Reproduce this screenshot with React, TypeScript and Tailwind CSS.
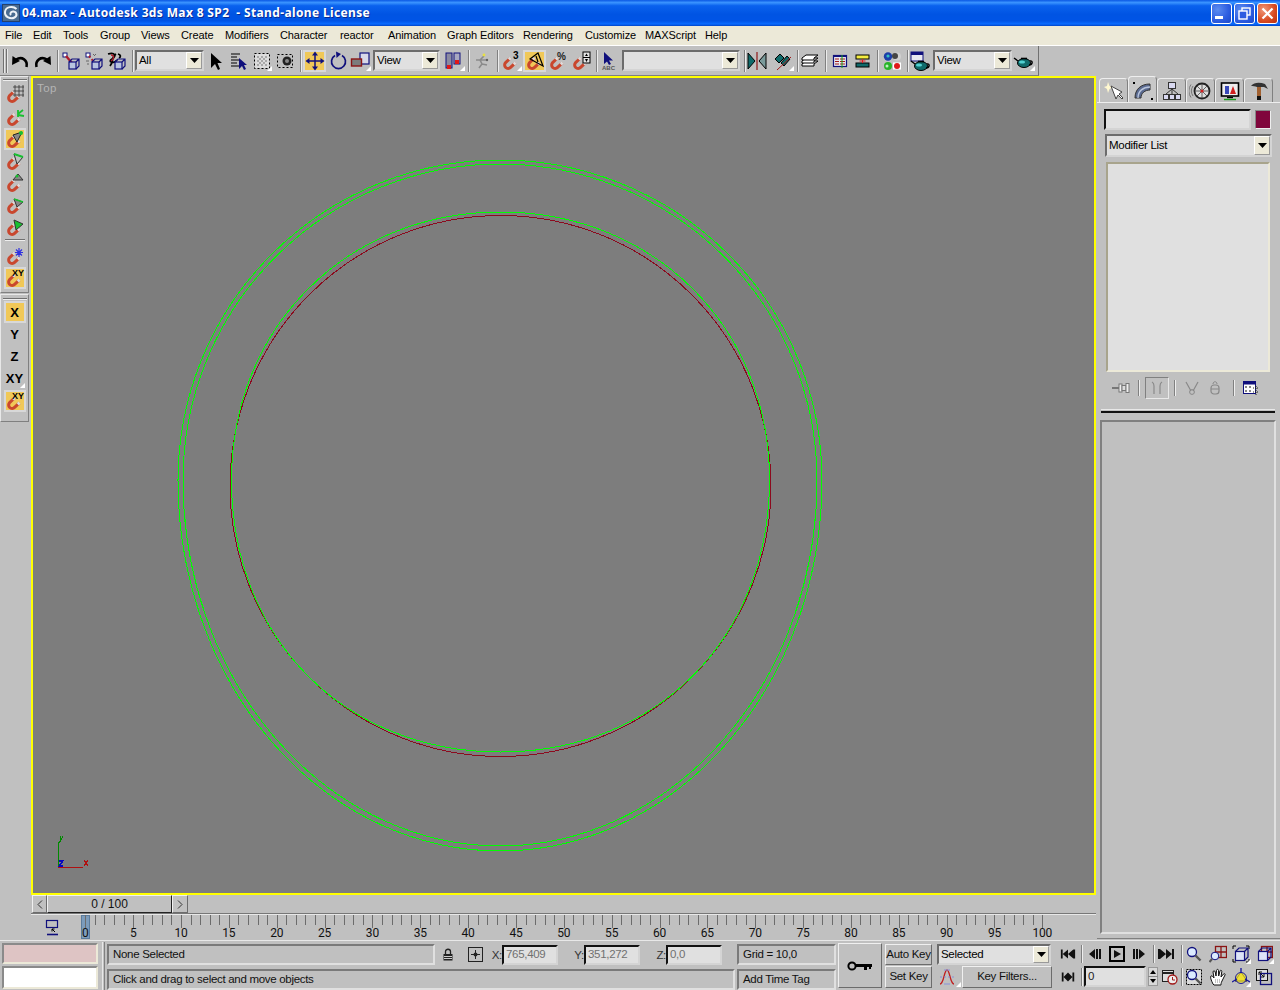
import React from "react";

const font = "font-['Liberation_Sans',Arial,sans-serif]";
const txt = "text-[11.5px] tracking-[-0.3px]";
const sunken = "border-2 border-t-[#6c6c6c] border-l-[#6c6c6c] border-r-[#d4d4d4] border-b-[#d4d4d4]";
const groove = "border-2 border-t-[#7a7a7a] border-l-[#7a7a7a] border-r-[#e0e0e0] border-b-[#e0e0e0]";
const raised = "border border-t-[#f0f0f0] border-l-[#f0f0f0] border-r-[#6c6c6c] border-b-[#6c6c6c]";
const NAVY = "#10107c";
const TEAL = "#0f6a6a";

const V = ({ w = 20, h = 20, children }: { w?: number; h?: number; children: React.ReactNode }) => (
  <svg width={w} height={h} viewBox={`0 0 ${w} ${h}`} className="block shrink-0">{children}</svg>
);

const Cube = ({ x, y, c = NAVY }: { x: number; y: number; c?: string }) => (
  <g fill="none" stroke={c} strokeWidth="1.2" transform={`translate(${x} ${y})`}>
    <rect x="0" y="3" width="7" height="7" fill="#b8c4e0" />
    <path d="M0 3 L3 0 H10 V7 L7 10 M7 3 L10 0" />
  </g>
);
const Undo = () => (
  <V><path d="M16.5 16 C18 9 12 5 6 8.5" fill="none" stroke="#000" strokeWidth="2.6" /><polygon points="2,14 2.5,5 10,10" fill="#000" /></V>
);
const Redo = () => (
  <V><g transform="matrix(-1 0 0 1 20 0)"><path d="M16.5 16 C18 9 12 5 6 8.5" fill="none" stroke="#000" strokeWidth="2.6" /><polygon points="2,14 2.5,5 10,10" fill="#000" /></g></V>
);
const LinkI = () => (
  <V><rect x="2" y="2" width="4" height="4" fill="#fff" stroke={NAVY} /><path d="M5 5 L11 12" stroke="#b01c2c" strokeWidth="2.4" /><Cube x={8} y={8} /></V>
);
const UnlinkI = () => (
  <V><rect x="2" y="2" width="4" height="4" fill="#fff" stroke={NAVY} /><path d="M5 5 L11 12" stroke="#b01c2c" strokeWidth="2" strokeDasharray="2 2" /><path d="M9 3 l2 2 M12 3 l-1 1 M2 10 h3 M3 13 h2" stroke="#666" /><Cube x={8} y={8} /></V>
);
const BindI = () => (
  <V><path d="M2 3 C9 1 11 5 6 8 C1 11 8 13 11 9 M4 15 C8 10 5 6 10 3 M12 3 C15 4 15 6 13 7" fill="none" stroke="#000" strokeWidth="1.8" /><path d="M5 4 C9 4 8 8 5 10" fill="none" stroke="#b01c2c" strokeWidth="1.4" /><Cube x={9} y={8} /></V>
);
const SelectI = () => <V><polygon points="4,2 4,17 8,13 11,19 13,18 10.5,12 15,12" fill="#000" /></V>;
const ByName = () => (
  <V><path d="M2 3 H11 M2 6 H8 M2 9 H11 M2 12 H8 M2 15 H11" stroke="#000" /><polygon points="10,7 10,18 13,15 15,19 17,18 15,14 18,14" fill={NAVY} /></V>
);
const RectSel = () => (
  <V><rect x="3" y="3" width="14" height="14" fill="#dcdcdc" /><path d="M5 5h2v2H5zM9 5h2v2H9zM13 5h2v2h-2zM7 7h2v2H7zM11 7h2v2h-2zM5 9h2v2H5zM9 9h2v2H9zM13 9h2v2h-2zM7 11h2v2H7zM11 11h2v2h-2zM5 13h2v2H5zM9 13h2v2H9zM13 13h2v2h-2z" fill="#a8a8a8" /><rect x="2.5" y="2.5" width="15" height="15" fill="none" stroke="#000" strokeDasharray="2 2" /></V>
);
const WindowI = () => (
  <V><rect x="2.5" y="3.5" width="15" height="13" fill="none" stroke="#000" strokeDasharray="2 2" /><circle cx="12" cy="10" r="4.5" fill="#222" /><circle cx="12" cy="10" r="2" fill="#888" /></V>
);
const MoveI = () => (
  <V><path d="M10 3 V17 M3 10 H17" stroke={NAVY} strokeWidth="1.5" /><polygon points="10,0.5 7,4.5 13,4.5" fill={NAVY} /><polygon points="10,19.5 7,15.5 13,15.5" fill={NAVY} /><polygon points="0.5,10 4.5,7 4.5,13" fill={NAVY} /><polygon points="19.5,10 15.5,7 15.5,13" fill={NAVY} /></V>
);
const RotateI = () => (
  <V><path d="M7 4.5 A7 7 0 1 0 14 4.5" fill="none" stroke={NAVY} strokeWidth="1.7" /><polygon points="8,0.5 8.5,7 13,3" fill={NAVY} /></V>
);
const ScaleI = () => (
  <V w={22}><rect x="10" y="2" width="9" height="11" fill="#d8d8e8" stroke={NAVY} strokeWidth="1.2" /><rect x="1.5" y="8" width="10" height="7" fill="#7c7c7c" stroke="#8a1414" strokeWidth="1.4" /></V>
);
const PivotI = () => (
  <V><rect x="3" y="2" width="6" height="15" fill="#8a8aa0" stroke={NAVY} /><rect x="11" y="2" width="6" height="11" fill="#a8a8c0" stroke={NAVY} /><rect x="4" y="14" width="4" height="4" fill="#e01818" /><rect x="12" y="9" width="4" height="4" fill="#e01818" /></V>
);
const ManipI = () => (
  <V><path d="M12 5 L8 9 L4 9 M8 9 L10 13 L7 17 M10 13 L15 14 M9 9 L15 9" fill="none" stroke="#8a8a8a" strokeWidth="1.6" /><circle cx="12" cy="4" r="1.4" fill="#e8e040" /><circle cx="15" cy="9" r="1.2" fill="#606060" /></V>
);
const Magnet = ({ children }: { children?: React.ReactNode }) => (
  <V>
    <path d="M9.5 7 L4.6 11.6 A3.4 3.4 0 0 0 9.6 16.4 L14.4 11.8" fill="none" stroke="#c9472e" strokeWidth="3" />
    <path d="M9.6 6.9 L7.9 8.5 M14.5 11.7 L12.8 13.3" stroke="#dcdcdc" strokeWidth="3" />
    {children}
  </V>
);
const Snap3 = () => <Magnet><text x="12" y="8" fontSize="10" fontWeight="700" fontFamily="Liberation Sans" fill="#000">3</text></Magnet>;
const SnapAngle = () => <Magnet><path d="M5 8 L13 2 L18 15 Z M11 5 L13 11" fill="none" stroke="#000" strokeWidth="1.2" /></Magnet>;
const SnapPct = () => <Magnet><text x="9" y="9" fontSize="10" fontWeight="700" fontFamily="Liberation Sans" fill="#222">%</text></Magnet>;
const SnapSpin = () => (
  <Magnet><rect x="12" y="1" width="7" height="11" fill="#e4e4e4" stroke="#000" /><path d="M12 6.5 H19" stroke="#000" /><polygon points="15.5,2.5 14,5 17,5" /><polygon points="15.5,11 14,8 17,8" /></Magnet>
);
const ArcI = () => (
  <V><polygon points="5,1 5,13 8,10.5 10,14 12,13 10,9.5 14,9.5" fill={NAVY} /><text x="3" y="19" fontSize="6" fontWeight="700" fontFamily="Liberation Sans" fill="#555">ABC</text></V>
);
const MirrorI = () => (
  <V w={22}><polygon points="2,2 9,10 2,18" fill={TEAL} stroke="#000" /><polygon points="20,2 13,10 20,18" fill="#7a9a9a" stroke="#000" /><path d="M11 1 V19" stroke="#901818" strokeWidth="1.2" /></V>
);
const AlignI = () => (
  <V><path d="M3 8 L8 3 L12 7 L7 12 Z" fill={TEAL} stroke="#000" /><path d="M9 12 L15 5 L18 8 L12 15 Z" fill={TEAL} stroke="#000" /><path d="M5 19 L19 6" stroke="#a01818" /></V>
);
const LayersI = () => (
  <V><g fill="#fff" stroke="#000"><path d="M2 13 L6 10 H18 L14 13 V15 H2 Z" /><path d="M2 10 L6 7 H18 L14 10 V12 H2 Z" /><path d="M2 7 L6 4 H18 L14 7 V9 H2 Z" /></g></V>
);
const TrackI = () => (
  <V><rect x="3.5" y="4.5" width="13" height="11" fill="#e8e8f0" stroke={NAVY} strokeWidth="1.2" /><rect x="3" y="4" width="14" height="2" fill={NAVY} /><path d="M5 8h4M5 10.5h4M5 13h4M10 8h5M10 10.5h5M10 13h5" stroke="#a01818" /><path d="M12 4V17" stroke="#18a018" /></V>
);
const SchemI = () => (
  <V><rect x="3" y="4" width="13" height="4" fill="#f4ec40" stroke="#000" /><rect x="3" y="12" width="13" height="4" fill={TEAL} stroke="#000" /><path d="M9.5 8 V12 M6.5 10 H12.5" stroke="#e02020" /></V>
);
const MatI = () => (
  <V><circle cx="6" cy="5.5" r="4.2" fill="#1c3ea8" /><circle cx="6" cy="5" r="1.6" fill="#30c0c0" /><circle cx="15" cy="5.5" r="4" fill="#d0d0d0" /><circle cx="13" cy="5" r="3" fill="#444" /><circle cx="6" cy="15" r="4" fill="#28b428" /><circle cx="5" cy="15" r="1.5" fill="#c0f0c0" /><rect x="11" y="11.5" width="8" height="7" fill="#fff" /><circle cx="15" cy="15" r="3" fill="#e01818" /></V>
);
const Teapot = () => (
  <>
    <ellipse cx="11" cy="13" rx="6.5" ry="4.5" fill={TEAL} stroke="#000" />
    <path d="M5 11 L1 8 M17 11 C20 10 20 15 16 15" fill="none" stroke="#000" strokeWidth="1.4" />
    <ellipse cx="9" cy="12" rx="3" ry="1.6" fill="#50d0d0" />
    <path d="M8 8.5 H14" stroke="#000" strokeWidth="1.6" />
  </>
);
const RenderScene = () => (
  <V w={22}><rect x="2" y="1" width="12" height="9" fill="#e8e8f0" stroke={NAVY} /><rect x="2" y="1" width="12" height="3" fill={NAVY} /><g transform="translate(1 2)"><Teapot /></g></V>
);
const QuickRender = () => <V w={22}><g transform="translate(0 -1)"><Teapot /></g></V>;

const Fly = () => (
  <svg width="5" height="5" viewBox="0 0 5 5" className="absolute bottom-[1px] right-[1px]"><polygon points="5,0 5,5 0,5" fill="#fff" /></svg>
);

const Sep = ({ c }: { c: string }) => <div className={`h-[22px] w-[2px] shrink-0 border-l border-r border-l-[#808080] border-r-[#ececec] ${c}`} />;

const Tb = ({ w, children, fly, on }: { w: string; children: React.ReactNode; fly?: boolean; on?: boolean }) => (
  <div className={`relative flex h-[22px] shrink-0 items-center justify-center ${w} ${on ? "border-2 border-[#d8d8d8] bg-[#f0c858]" : ""}`}>
    {children}
    {fly ? <Fly /> : null}
  </div>
);

const Arrow = ({ w = "w-[16px]" }: { w?: string }) => (
  <div className={`flex h-full shrink-0 items-center justify-center bg-[#ece9d8] ${w} border border-t-[#fff] border-l-[#fff] border-r-[#999] border-b-[#999]`}>
    <svg width="9" height="5" viewBox="0 0 9 5"><polygon points="0,0 9,0 4.5,5" fill="#000" /></svg>
  </div>
);

const Drop = ({ w, text, extra = "" }: { w: string; text?: string; extra?: string }) => (
  <div className={`flex h-[21px] shrink-0 items-stretch bg-[#e0e0e0] ${sunken} ${w} ${extra}`}>
    <div className={`flex-1 truncate pl-[2px] leading-[17px] text-[#000] ${txt}`}>{text}</div>
    <Arrow />
  </div>
);

const menus: [string, string][] = [
  ["File", "w-[28px]"], ["Edit", "w-[30px]"], ["Tools", "w-[37px]"], ["Group", "w-[41px]"], ["Views", "w-[40px]"],
  ["Create", "w-[44px]"], ["Modifiers", "w-[55px]"], ["Character", "w-[60px]"], ["reactor", "w-[48px]"], ["Animation", "w-[59px]"],
  ["Graph Editors", "w-[76px]"], ["Rendering", "w-[62px]"], ["Customize", "w-[60px]"], ["MAXScript", "w-[60px]"], ["Help", "w-[30px]"],
];

const Logo = () => (
  <svg width="18" height="18" viewBox="0 0 18 18" className="block">
    <rect width="18" height="18" fill="#24406c" />
    <rect x="1" y="1" width="16" height="16" fill="#4a6c90" />
    <path d="M14.5 5 C11 1.5 3.5 2.5 3 8 C2.6 13 8.5 15.5 12.5 13.5 C15.5 12 15 8 11.5 7.5 C9 7.2 7.5 9.5 9 11" fill="none" stroke="#eef2f6" strokeWidth="2" />
  </svg>
);

const XpBtn = ({ red, children }: { red?: boolean; children: React.ReactNode }) => (
  <div className={`flex h-[21px] w-[21px] items-center justify-center rounded-[3px] border border-white ${red ? "bg-[radial-gradient(circle_at_30%_30%,#f09878,#d84a20_60%,#b83010)]" : "bg-[radial-gradient(circle_at_30%_30%,#5c8cf0,#2c5ce0_60%,#1c48c8)]"}`}>
    {children}
  </div>
);

const TitleBar = () => (
  <div className="flex h-[26px] shrink-0 items-center bg-[linear-gradient(180deg,#0a58e4_0%,#3a94ff_10%,#0a62ee_22%,#0054e3_55%,#0054e6_80%,#0a6cff_92%,#0044c8_100%)] pl-[2px] pr-[2px]">
    <Logo />
    <div className="ml-[2px] flex-1 whitespace-pre font-['Noto_Sans',sans-serif] text-[12px] font-bold tracking-[0.36px] text-white [text-shadow:1px_1px_0_#0a2a90]">04.max - Autodesk 3ds Max 8 SP2  - Stand-alone License</div>
    <div className="flex gap-[2px]">
      <XpBtn><div className="mt-[9px] mr-[5px] h-[3px] w-[8px] bg-white" /></XpBtn>
      <XpBtn>
        <svg width="13" height="13" viewBox="0 0 13 13"><rect x="4" y="1" width="8" height="7" fill="none" stroke="#fff" strokeWidth="1.4" /><rect x="1" y="4" width="8" height="8" fill="#2c5ce0" stroke="#fff" strokeWidth="1.4" /></svg>
      </XpBtn>
      <XpBtn red>
        <svg width="13" height="13" viewBox="0 0 13 13"><path d="M1.5 1.5 L11.5 11.5 M11.5 1.5 L1.5 11.5" stroke="#fff" strokeWidth="2.2" /></svg>
      </XpBtn>
    </div>
  </div>
);

const MenuBar = () => (
  <div className="flex h-[20px] shrink-0 items-start border-b border-white bg-[#ece9d8] pl-[5px] pt-[2px] text-[11px] leading-[14px] tracking-[-0.1px] text-black">
    {menus.map(([t, w]) => (
      <div key={t} className={`shrink-0 ${w}`}>{t}</div>
    ))}
  </div>
);

const Toolbar = () => (
  <div className="flex h-[30px] shrink-0">
    <div className="flex h-[30px] w-[1039px] items-center border-r border-b border-r-[#707070] border-b-[#808080] pl-[3px]">
      <div className="flex h-[24px] w-[5px] shrink-0 gap-[1px]">
        <div className="h-full w-[2px] border-l border-l-[#707070] bg-[#e8e8e8]" />
        <div className="h-full w-[2px] border-l border-l-[#707070] bg-[#e8e8e8]" />
      </div>
      <Tb w="w-[23px]"><Undo /></Tb>
      <Tb w="w-[23px]"><Redo /></Tb>
      <Sep c="ml-[3px] mr-[1px]" />
      <Tb w="w-[22px]"><LinkI /></Tb>
      <Tb w="w-[23px]"><UnlinkI /></Tb>
      <Tb w="w-[22px]"><BindI /></Tb>
      <Sep c="ml-[5px] mr-[1px]" />
      <Drop w="w-[69px]" text="All" />
      <Tb w="w-[23px] ml-[1px]"><SelectI /></Tb>
      <Tb w="w-[22px]"><ByName /></Tb>
      <Tb w="w-[22px] ml-[1px]" fly><RectSel /></Tb>
      <Tb w="w-[22px] ml-[1px]"><WindowI /></Tb>
      <Sep c="ml-[4px] mr-[1px]" />
      <Tb w="w-[23px]" on><MoveI /></Tb>
      <Tb w="w-[23px]"><RotateI /></Tb>
      <Tb w="w-[23px]" fly><ScaleI /></Tb>
      <Drop w="w-[67px] ml-[1px]" text="View" />
      <Tb w="w-[26px]" fly><PivotI /></Tb>
      <Sep c="ml-[2px]" />
      <Tb w="w-[24px]"><ManipI /></Tb>
      <Sep c="ml-[3px]" />
      <Tb w="w-[24px]" fly><Snap3 /></Tb>
      <Tb w="w-[23px]" on><SnapAngle /></Tb>
      <Tb w="w-[24px]"><SnapPct /></Tb>
      <Tb w="w-[22px]"><SnapSpin /></Tb>
      <Sep c="ml-[4px]" />
      <Tb w="w-[22px]"><ArcI /></Tb>
      <Drop w="w-[118px] ml-[2px]" />
      <Sep c="ml-[4px]" />
      <Tb w="w-[22px]"><MirrorI /></Tb>
      <Tb w="w-[27px]" fly><AlignI /></Tb>
      <Sep c="ml-[2px]" />
      <Tb w="w-[22px]"><LayersI /></Tb>
      <Sep c="ml-[4px]" />
      <Tb w="w-[26px]"><TrackI /></Tb>
      <Tb w="w-[20px]"><SchemI /></Tb>
      <Sep c="ml-[4px]" />
      <Tb w="w-[25px]"><MatI /></Tb>
      <Sep c="ml-[3px]" />
      <Tb w="w-[22px]"><RenderScene /></Tb>
      <Drop w="w-[79px] ml-[2px]" text="View" />
      <Tb w="w-[24px]" fly><QuickRender /></Tb>
    </div>
  </div>
);

const Lb = ({ children, on }: { children: React.ReactNode; on?: boolean }) => (
  <div className={`relative flex h-[22px] w-[22px] items-center justify-center ${on ? "border-2 border-[#d8d8d8] bg-[#f0c858]" : ""}`}>{children}</div>
);

const GREEN = "#18c030";
const LeftBar = () => (
  <div className="flex w-[31px] shrink-0 flex-col">
    <div className="flex h-[217px] w-[29px] flex-col items-center border border-t-[#e8e8e8] border-l-[#e8e8e8] border-r-[#808080] border-b-[#808080] pt-[2px]">
      <div className="mb-[2px] h-[2px] w-[24px] border-t border-t-[#707070] bg-[#eee]" />
      <Lb><Magnet><path d="M8 3H19M8 7H19M8 11H19M10 1V13M14 1V13M18 1V13" stroke="#333" strokeWidth="0.8" /></Magnet></Lb>
      <div className="h-[1px]" />
      <Lb><Magnet><path d="M13 10 L13 3 M13 7 L18 3 M13 8 L19 9" stroke={GREEN} strokeWidth="1.8" /></Magnet></Lb>
      <Lb on><Magnet><path d="M8 6 L17 3 L12 13 Z" fill="#888" stroke="#222" /><circle cx="16" cy="4" r="2" fill={GREEN} /></Magnet></Lb>
      <Lb><Magnet><path d="M9 3 L18 6 L12 13 Z" fill="none" stroke="#333" /><path d="M9 3 L18 6" stroke={GREEN} strokeWidth="2" /></Magnet></Lb>
      <Lb><Magnet><path d="M8 7 L18 7 L13 1 Z" fill="#888" stroke="#333" /><circle cx="12" cy="3" r="1.5" fill={GREEN} /></Magnet></Lb>
      <Lb><Magnet><path d="M9 4 L18 7 L12 12 Z" fill="#888" stroke="#333" /><path d="M9 4 L18 7" stroke={GREEN} strokeWidth="1.6" /></Magnet></Lb>
      <Lb><Magnet><path d="M9 3 L18 7 L11 13 Z" fill={GREEN} stroke="#333" /></Magnet></Lb>
      <div className="mb-[4px] mt-[1px] h-[2px] w-[20px] border-t border-t-[#707070] bg-[#eee]" />
      <Lb><Magnet><path d="M14 2V11M10 6.5H18M11 3.5L17 9.5M17 3.5L11 9.5" stroke="#3030e0" strokeWidth="1.2" /></Magnet></Lb>
      <Lb on><Magnet><text x="7" y="8" fontSize="9" fontWeight="700" fontFamily="Liberation Sans" fill="#000">XY</text></Magnet></Lb>
    </div>
    <div className="mt-[1px] flex h-[128px] w-[29px] flex-col items-center border border-t-[#e8e8e8] border-l-[#e8e8e8] border-r-[#808080] border-b-[#808080] pt-[3px] text-[13px] font-bold leading-none text-black">
      <div className="mb-[1px] h-[2px] w-[24px] border-t border-t-[#707070] bg-[#eee]" />
      <Lb on>X</Lb>
      <Lb>Y</Lb>
      <Lb>Z</Lb>
      <Lb>XY<Fly /></Lb>
      <div className="h-[1px]" />
      <Lb on><Magnet><text x="7" y="8" fontSize="9" fontWeight="700" fontFamily="Liberation Sans" fill="#000">XY</text></Magnet></Lb>
    </div>
  </div>
);

const Scene = () => (
  <svg viewBox="33 78 1061 815" width="1061" height="815" className="block" shapeRendering="crispEdges" fill="none">
    <circle cx="500.5" cy="486" r="270.5" stroke="#8c0a1e" />
    <path d="M231.5,480 C231.5,327 347,212 500.5,212 C654,212 769.5,327 769.5,480 C769.5,638 656,752 500.5,752 C344,752 231.5,638 231.5,480" stroke="#00ff00" />
    <path d="M178,480 A322,320 0 0 1 822,480 A322,371 0 0 1 178,480" stroke="#00ff00" />
    <path d="M183,480 A317,316 0 0 1 817,480 A317,366 0 0 1 183,480" stroke="#00ff00" />
    <path d="M58.5 867.5 V843 L60 841" stroke="#008a00" strokeWidth="1" />
    <path d="M58 867.5 H83" stroke="#b01010" strokeWidth="1" />
    <path d="M60 836 L61 840 L63 836 M61 840 L59 843" stroke="#008a00" />
    <path d="M59 861 H63 L59 866 H63" stroke="#0808c0" strokeWidth="1.2" />
    <path d="M84 860 L88 866 M88 860 L84 866" stroke="#b01010" strokeWidth="1.2" />
  </svg>
);

const Viewport = () => (
  <div className="relative h-[819px] w-[1065px] border-2 border-[#ffff00] bg-[#7d7d7d]">
    <Scene />
    <div className="absolute left-[4px] top-[3px] text-[11.5px] leading-[14px] tracking-[0.4px] text-[#b4b4b4]">Top</div>
  </div>
);

const TimeSlider = () => (
  <div className="flex h-[18px] w-[1065px] items-stretch pl-[1px] text-[12px] leading-[15px]">
    <div className={`flex w-[15px] items-center justify-center text-[#333] ${raised}`}>
      <svg width="6" height="9" viewBox="0 0 6 9"><path d="M5 0.5 L1 4.5 L5 8.5" fill="none" stroke="#333" /></svg>
    </div>
    <div className="flex w-[125px] items-center justify-center border border-t-[#f0f0f0] border-l-[#f0f0f0] border-r-[#222] border-b-[#222] text-[#111]">0 / 100</div>
    <div className={`flex w-[16px] items-center justify-center text-[#333] ${raised}`}>
      <svg width="6" height="9" viewBox="0 0 6 9"><path d="M1 0.5 L5 4.5 L1 8.5" fill="none" stroke="#333" /></svg>
    </div>
  </div>
);

const frames = Array.from({ length: 101 }, (_, i) => i);
const fx = (i: number) => 85.3 + i * 9.57;

const TrackBar = () => (
  <svg viewBox="31 913 1065 27" width="1065" height="27" className="block">
    <path d="M31 913.5 H1096" stroke="#777" />
    <path d="M31 914.5 H1096" stroke="#e8e8e8" />
    <rect x="81.5" y="915.5" width="8" height="23" fill="#7c9cbc" stroke="#5c7c9c" />
    {frames.map((i) => (
      <path key={i} d={`M${Math.round(fx(i)) + 0.5} 915 V${i % 5 === 0 ? 928 : 925}`} stroke="#6c6c6c" />
    ))}
    {frames.filter((i) => i % 5 === 0).map((i) => (
      <text key={i} x={fx(i)} y={937} textAnchor="middle" fontSize="12" fontFamily="Roboto" letterSpacing="-0.2" fill="#111">{i}</text>
    ))}
    <g fill="none" stroke={NAVY} strokeWidth="1.2">
      <rect x="46.5" y="920.5" width="11" height="7" />
      <path d="M47 934.5 H58" strokeWidth="1.6" />
    </g>
    <path d="M52 929 l3 3 M52 929 h2.5 M52 929 v2.5" stroke="#000" fill="none" />
  </svg>
);

const TabWrap = ({ on, children }: { on?: boolean; children: React.ReactNode }) => (
  <div className={`flex w-[29px] items-center justify-center rounded-t-[4px] border border-b-0 border-t-[#eee] border-l-[#eee] border-r-[#808080] ${on ? "h-[26px] bg-[#c8c8c8]" : "h-[24px]"}`}>{children}</div>
);

const Tabs = () => (
  <div className="flex h-[27px] items-end border-b border-b-[#eee] pl-[2px]">
    <TabWrap>
      <V><path d="M4 1 L5.5 5 L10 6 L5.5 8 L4 12 L3 8 L0 6 L3 5 Z" fill="#fff8d0" /><polygon points="7,5 12,18 14,14 18,18 19,17 15,13 18,11" fill="#fff" stroke="#444" /></V>
    </TabWrap>
    <TabWrap on>
      <V w={22}><path d="M3 18 C3 9 9 4 18 4 L18 10 C13 10 9 13 9 18 Z" fill="#5a6a90" stroke="#333" /><path d="M6 18 C6 11 11 7 18 7" fill="none" stroke="#b8c4dc" strokeWidth="1.4" /><rect x="1" y="2" width="2" height="2" fill="#000" /><rect x="19" y="18" width="2" height="2" fill="#000" /></V>
    </TabWrap>
    <TabWrap>
      <V><g fill="#d8d8f0" stroke="#333"><rect x="6.5" y="1.5" width="7" height="6" /><rect x="1.5" y="13.5" width="5" height="5" /><rect x="7.5" y="13.5" width="5" height="5" /><rect x="13.5" y="13.5" width="5" height="5" /></g><path d="M10 8 V13 M4 13 L10 8 L16 13" fill="none" stroke="#333" /></V>
    </TabWrap>
    <TabWrap>
      <V w={24}><path d="M4 5 A9 9 0 0 0 4 15 M2 3.5 A11 11 0 0 0 2 16.5" fill="none" stroke="#777" /><circle cx="13" cy="10" r="7.5" fill="#ddd" stroke="#222" strokeWidth="1.8" /><path d="M13 3V17M6 10H20M8 5L18 15M18 5L8 15" stroke="#444" strokeWidth="0.8" /><circle cx="13" cy="10" r="1.6" fill="#d02020" /></V>
    </TabWrap>
    <TabWrap>
      <V><rect x="1.5" y="2" width="17" height="13" fill="#eee" stroke="#000" strokeWidth="1.6" /><rect x="5" y="5" width="4" height="8" fill="#3848b8" /><polygon points="10,13 13,5 16,13" fill="#d02020" /><path d="M7 16.5H13" stroke="#000" strokeWidth="1.4" /><path d="M4 18.5H16" stroke="#18a018" strokeWidth="1.4" /></V>
    </TabWrap>
    <TabWrap>
      <V><path d="M2 5 C5 1 11 1 16 3 L19 8 L15 6 L12 6 L8 6 C6 5 4 5 2 5 Z" fill="#333" /><rect x="8" y="6" width="4" height="9" fill="#a06030" /><rect x="8" y="15" width="4" height="4" fill="#111" /></V>
    </TabWrap>
  </div>
);

const Gray = ({ children, w }: { children: React.ReactNode; w: string }) => (
  <div className={`flex h-[20px] shrink-0 items-center justify-center ${w}`}>{children}</div>
);

const RightPanel = () => (
  <div className="flex w-[184px] shrink-0 flex-col pl-[1px]">
    <Tabs />
    <div className="mt-[6px] flex items-start pl-[7px]">
      <div className="h-[21px] w-[147px] bg-[#e0e0e0] border-2 border-t-[#111] border-l-[#111] border-r-[#d4d4d4] border-b-[#d4d4d4]" />
      <div className="ml-[4px] mt-[1px] h-[19px] w-[16px] border border-t-[#888] border-l-[#888] border-r-[#eee] border-b-[#eee] bg-[#80063c]" />
    </div>
    <div className="mt-[4px] pl-[8px]">
      <div className={`flex h-[23px] w-[167px] items-stretch bg-[#e0e0e0] ${sunken}`}>
        <div className={`flex-1 pl-[2px] leading-[19px] text-black ${txt}`}>Modifier List</div>
        <Arrow />
      </div>
    </div>
    <div className="ml-[9px] mt-[5px] h-[210px] w-[164px] border-2 border-t-[#a8a48c] border-l-[#a8a48c] border-r-[#ece9d8] border-b-[#ece9d8] bg-[#e0e0e0]" />
    <div className="ml-[12px] mt-[6px] flex h-[20px] items-center">
      <Gray w="w-[24px]">
        <svg width="18" height="12" viewBox="0 0 18 12"><path d="M0 6 H7" stroke="#777" strokeWidth="2" /><rect x="7" y="2" width="3" height="8" fill="#eee" stroke="#777" /><rect x="10" y="3.5" width="4" height="5" fill="#ddd" stroke="#777" /><rect x="14" y="1.5" width="3" height="9" fill="#eee" stroke="#777" /></svg>
      </Gray>
      <div className="ml-[5px] mr-[5px] h-[16px] w-[2px] border-l border-r border-l-[#808080] border-r-[#eee]" />
      <div className="flex h-[22px] w-[24px] items-center justify-center border border-t-[#808080] border-l-[#808080] border-r-[#e8e8e8] border-b-[#e8e8e8]">
        <svg width="12" height="14" viewBox="0 0 12 14"><path d="M1 1 C3 2 3 3 3 5 V13 M11 1 C9 2 9 3 9 5 V13" fill="none" stroke="#8a8a8a" strokeWidth="1.2" /></svg>
      </div>
      <div className="ml-[5px] h-[16px] w-[2px] border-l border-r border-l-[#808080] border-r-[#eee]" />
      <Gray w="w-[28px] ml-[2px]">
        <svg width="14" height="14" viewBox="0 0 14 14"><path d="M1 1 L6 10 M13 1 L8 10" stroke="#888" strokeWidth="1.2" /><circle cx="7" cy="11" r="2.4" fill="none" stroke="#888" /></svg>
      </Gray>
      <Gray w="w-[18px]">
        <svg width="10" height="14" viewBox="0 0 10 14"><rect x="1" y="4" width="8" height="9" rx="3" fill="none" stroke="#888" strokeWidth="1.2" /><path d="M3 3 C3 0 7 0 7 3 M1 8 H9" fill="none" stroke="#888" /></svg>
      </Gray>
      <div className="ml-[9px] h-[16px] w-[2px] border-l border-r border-l-[#808080] border-r-[#eee]" />
      <Gray w="w-[30px] ml-[1px]">
        <svg width="16" height="15" viewBox="0 0 16 15"><rect x="0.5" y="0.5" width="12" height="12" fill="#fff" stroke={NAVY} /><rect x="0.5" y="0.5" width="12" height="3" fill={NAVY} /><path d="M2 5h2v2H2zM6 5h2v2H6zM2 9h2v2H2zM6 9h2v2H6z" fill="#888" /><path d="M10 7 H16 M10 11 H16 M13 5 V15" stroke="#222" strokeDasharray="1 1" /></svg>
      </Gray>
    </div>
    <div className="ml-[4px] mt-[11px] h-[4px] w-[174px] border-t border-b-2 border-t-[#e8e8e8] border-b-[#111]" />
    <div className="ml-[3px] mt-[7px] h-[514px] w-[176px] border-2 border-t-[#808080] border-l-[#808080] border-r-[#e0e0e0] border-b-[#e0e0e0]" />
    <div className="mt-[4px] h-[1px] bg-[#808080]" />
  </div>
);

const Inset = ({ w, children, extra = "" }: { w: string; children?: React.ReactNode; extra?: string }) => (
  <div className={`flex h-[21px] shrink-0 items-center pl-[4px] text-[#111] ${txt} ${groove} ${w} ${extra}`}>{children}</div>
);

const Field = ({ w, children }: { w: string; children?: React.ReactNode }) => (
  <div className={`flex h-[20px] shrink-0 items-center bg-[#e0e0e0] pl-[2px] text-[#707070] ${txt} border-2 border-t-[#111] border-l-[#111] border-r-[#d4d4d4] border-b-[#d4d4d4] ${w}`}>{children}</div>
);

const Axis = ({ w, children }: { w: string; children: React.ReactNode }) => (
  <div className={`shrink-0 text-right leading-[20px] text-[#333] ${txt} ${w}`}>{children}</div>
);

const SmallBtn = ({ w, h, children, extra = "" }: { w: string; h: string; children: React.ReactNode; extra?: string }) => (
  <div className={`flex shrink-0 items-center justify-center whitespace-nowrap text-[#111] ${txt} ${raised} ${w} ${h} ${extra}`}>{children}</div>
);

const T = ({ w, children, extra = "", fly }: { w: string; children: React.ReactNode; extra?: string; fly?: boolean }) => (
  <div className={`relative flex h-[23px] shrink-0 items-center justify-center ${w} ${extra}`}>{children}{fly ? <Fly /> : null}</div>
);
const TSep = ({ c }: { c: string }) => <div className={`h-[18px] w-[2px] shrink-0 border-l border-r border-l-[#808080] border-r-[#eee] ${c}`} />;

const Tr = ({ d }: { d: string }) => (
  <svg width="18" height="12" viewBox="0 0 18 12" fill="#111"><path d={d} /></svg>
);

const NavZoom = ({ dashed }: { dashed?: boolean }) => (
  <V w={18} h={18}>
    {dashed ? <rect x="1.5" y="1.5" width="15" height="15" fill="#dcdcdc" stroke="#000" strokeDasharray="2 1" /> : null}
    <circle cx="7" cy="7" r="4.5" fill="#dcebff" stroke={NAVY} strokeWidth="1.3" />
    <path d="M10.5 10.5 L15.5 15.5" stroke="#555" strokeWidth="2.4" />
  </V>
);
const RedGrid = () => (
  <g fill="none" stroke="#8a1414" strokeWidth="1.3"><rect x="6.5" y="1.5" width="11" height="11" /><path d="M12 1.5V12.5M6.5 7H17.5" /></g>
);
const NavCube = () => (
  <g fill="#dde4f8" stroke={NAVY} strokeWidth="1.2"><rect x="3.5" y="6.5" width="9" height="9" /><path d="M3.5 6.5 L7 3 H16 V12 L12.5 15.5 M12.5 6.5 L16 3" fill="none" /></g>
);

const Bottom = () => (
  <div className="flex h-[50px] shrink-0 items-start border-t border-t-[#e8e8e8] text-black">
    <div className="w-[100px] shrink-0 pl-[2px] pt-[2px]">
      <div className="h-[21px] w-[96px] border-2 border-t-[#8a8a8a] border-l-[#8a8a8a] border-r-[#ece9d8] border-b-[#ece9d8] bg-[#dec4c4]" />
      <div className="mt-[2px] h-[23px] w-[96px] border-2 border-t-[#8a8a8a] border-l-[#8a8a8a] border-r-[#ece9d8] border-b-[#ece9d8] bg-white" />
    </div>
    <div className="ml-[2px] mt-[1px] h-[49px] w-[3px] shrink-0 border-l border-r border-l-[#e8e8e8] border-r-[#808080]" />
    <div className="ml-[2px] w-[628px] shrink-0 pt-[3px]">
      <div className="flex h-[21px] items-center">
        <Inset w="w-[328px]">None Selected</Inset>
        <div className="flex w-[26px] shrink-0 justify-center">
          <svg width="10" height="13" viewBox="0 0 10 13"><path d="M2.5 6 V3.5 C2.5 0.5 7.5 0.5 7.5 3.5 V6" fill="none" stroke="#222" strokeWidth="1.3" /><rect x="0.5" y="6" width="9" height="6.5" fill="#222" /><path d="M1 8.5H9M1 10.5H9" stroke="#ccc" /></svg>
        </div>
        <div className="ml-[7px] flex h-[15px] w-[15px] shrink-0 items-center justify-center border border-[#222]">
          <svg width="13" height="13" viewBox="0 0 13 13"><path d="M6.5 2V11M2 6.5H11" stroke="#222" /><circle cx="6.5" cy="6.5" r="2" fill="#222" /></svg>
        </div>
        <Axis w="w-[19px]">X:</Axis>
        <Field w="w-[56px]">765,409</Field>
        <Axis w="w-[26px]">Y:</Axis>
        <Field w="w-[56px]">351,272</Field>
        <Axis w="w-[26px]">Z:</Axis>
        <Field w="w-[56px]">0,0</Field>
      </div>
      <div className="mt-[4px]">
        <Inset w="w-[628px]">Click and drag to select and move objects</Inset>
      </div>
    </div>
    <div className="ml-[2px] w-[99px] shrink-0 pt-[3px]">
      <Inset w="w-[99px]">Grid = 10,0</Inset>
      <Inset w="w-[99px]" extra="mt-[4px]">Add Time Tag</Inset>
    </div>
    <div className="ml-[2px] pt-[2px]">
      <SmallBtn w="w-[44px]" h="h-[45px]">
        <svg width="26" height="12" viewBox="0 0 26 12"><circle cx="5" cy="6" r="3.6" fill="none" stroke="#000" strokeWidth="2" /><path d="M9 5.5 H25" stroke="#000" strokeWidth="3" /><rect x="17" y="6" width="3" height="4" fill="#000" /><rect x="22" y="6" width="2" height="3" fill="#000" /></svg>
      </SmallBtn>
    </div>
    <div className="ml-[3px] w-[167px] shrink-0 pt-[3px]">
      <div className="flex h-[21px] items-start">
        <SmallBtn w="w-[47px]" h="h-[21px]">Auto Key</SmallBtn>
        <div className={`ml-[5px] flex h-[21px] w-[114px] items-stretch bg-[#e0e0e0] ${sunken}`}>
          <div className={`flex-1 pl-[2px] leading-[17px] text-black ${txt}`}>Selected</div>
          <Arrow />
        </div>
      </div>
      <div className="mt-[1px] flex items-start">
        <SmallBtn w="w-[47px]" h="h-[22px]">Set Key</SmallBtn>
        <div className="relative flex h-[22px] w-[30px] shrink-0 items-center justify-center">
          <svg width="16" height="16" viewBox="0 0 16 16"><path d="M1 15 C5 15 5 1 8 1 C11 1 11 15 15 15" fill="none" stroke="#c02020" strokeWidth="1.3" /><path d="M1 8H15" stroke="#8890d8" strokeDasharray="2 2" /><path d="M5 1H11M5 15H11" stroke="#8890d8" /></svg>
          <Fly />
        </div>
        <SmallBtn w="w-[90px]" h="h-[22px]">Key Filters...</SmallBtn>
      </div>
    </div>
    <div className="ml-[8px] shrink-0 pt-[1px]">
      <div className="flex items-center">
        <T w="w-[16px]"><Tr d="M1 1h2v10H1zM3 6l6-5v10zM9 6l6-5v10zM15 1h2v10h-2z" /></T>
        <TSep c="ml-[5px]" />
        <T w="w-[24px]"><Tr d="M3 6l6-5v10zM10 1h2v10h-2zM13 1h2v10h-2z" /></T>
        <T w="w-[16px]" extra="ml-[2px]">
          <div className="relative flex h-[16px] w-[16px] items-center justify-center border-2 border-black">
            <svg width="7" height="8" viewBox="0 0 7 8"><polygon points="0,0 7,4 0,8" fill="#111" /></svg>
          </div>
        </T>
        <T w="w-[28px]"><Tr d="M3 1h2v10H3zM6 1h2v10H6zM9 1l6 5-6 5z" /></T>
        <TSep c="" />
        <T w="w-[22px]"><Tr d="M1 1h2v10H1zM3 1l6 5-6 5zM9 1l6 5-6 5zM15 1h2v10h-2z" /></T>
        <TSep c="ml-[4px]" />
        <T w="w-[22px]"><NavZoom /></T>
        <T w="w-[22px]" extra="ml-[2px]"><V w={18} h={18}><RedGrid /><circle cx="6" cy="11" r="3.8" fill="#dcebff" stroke={NAVY} /><path d="M3 14 L0.5 17" stroke="#555" strokeWidth="2" /></V></T>
        <T w="w-[22px]" extra="ml-[1px]" fly><V w={18} h={18}><path d="M1 4V1H4M14 1H17V4M17 14V17H14M4 17H1V14" fill="none" stroke="#000" /><NavCube /></V></T>
        <T w="w-[22px]" extra="ml-[1px]" fly><V w={18} h={18}><RedGrid /><NavCube /></V></T>
      </div>
      <div className="flex items-center">
        <T w="w-[16px]"><Tr d="M2 1h2v10H2zM4 6l5-5v10zM9 1l5 5-5 5zM14 1h2v10h-2z" /></T>
        <TSep c="ml-[5px]" />
        <div className={`ml-[1px] flex h-[21px] w-[62px] shrink-0 items-center bg-[#e0e0e0] pl-[2px] text-[#222] ${txt} border-2 border-t-[#111] border-l-[#111] border-r-[#d4d4d4] border-b-[#d4d4d4]`}>0</div>
        <T w="w-[13px]">
          <svg width="10" height="19" viewBox="0 0 10 19"><rect x="0.5" y="0.5" width="9" height="18" fill="#d8d8d8" stroke="#999" /><path d="M0 9.5H10" stroke="#888" /><polygon points="5,3 2,7 8,7" fill="#000" /><polygon points="5,16 2,12 8,12" fill="#000" /></svg>
        </T>
        <T w="w-[22px]">
          <svg width="16" height="16" viewBox="0 0 16 16"><rect x="0.5" y="1.5" width="11" height="11" fill="#ddd" stroke="#222" /><path d="M1 4H11" stroke="#222" strokeWidth="2" /><circle cx="10.5" cy="10.5" r="4.5" fill="#eee" stroke="#a01818" strokeWidth="1.3" /><path d="M10.5 8V11H13" stroke="#a01818" fill="none" /></svg>
        </T>
        <TSep c="" />
        <T w="w-[22px]"><NavZoom dashed /></T>
        <T w="w-[22px]" extra="ml-[2px]">
          <svg width="18" height="18" viewBox="0 0 18 18"><path d="M4 16 C2 12 1 9 2 8 C3 7 4 9 5 10 L4 4 C4 2.5 6 2.5 6.2 4 L7 8 L7.5 2.5 C7.7 1 9.5 1 9.5 2.5 L9.7 8 L11 3 C11.3 1.8 13 2.2 12.8 3.5 L12 9 L14.5 6 C15.5 5 16.5 6 16 7 L13 13 C12 15 12 16 12 17 H5 Z" fill="#fff" stroke="#111" /><path d="M6 12 H11 M6 14 H11" stroke="#888" strokeDasharray="1 1" /></svg>
        </T>
        <T w="w-[22px]" extra="ml-[1px]" fly>
          <svg width="18" height="18" viewBox="0 0 18 18"><polygon points="9,4 15,13 3,13" fill="#f0e030" stroke="#111" /><circle cx="9" cy="10" r="5.5" fill="#f0e030" fillOpacity="0.7" stroke="#1a1a9c" /><path d="M9 0 V5 M0 14 L5 11 M18 14 L13 11" stroke="#1a1a9c" strokeWidth="1.4" /></svg>
        </T>
        <T w="w-[22px]" extra="ml-[1px]">
          <svg width="18" height="18" viewBox="0 0 18 18"><rect x="1.5" y="1.5" width="11" height="11" fill="#ddd" stroke="#111" /><rect x="5.5" y="5.5" width="11" height="11" fill="none" stroke={NAVY} strokeWidth="1.3" /><path d="M4 4 L9 9 M4 4h3M4 4v3M9 9h-3M9 9v-3" stroke="#111" /></svg>
        </T>
      </div>
    </div>
  </div>
);

export default function App() {
  return (
    <div className={`flex h-[990px] w-[1280px] flex-col overflow-hidden bg-[#c0c0c0] ${font}`}>
      <TitleBar />
      <MenuBar />
      <Toolbar />
      <div className="flex h-[864px] shrink-0">
        <LeftBar />
        <div className="flex w-[1065px] shrink-0 flex-col">
          <Viewport />
          <TimeSlider />
          <TrackBar />
        </div>
        <RightPanel />
      </div>
      <Bottom />
    </div>
  );
}
